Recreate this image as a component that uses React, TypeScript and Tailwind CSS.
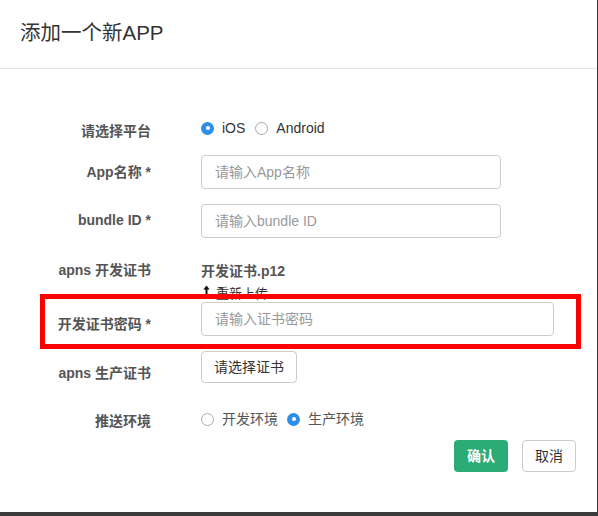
import React from 'react';

function Radio({ checked, label }: { checked?: boolean; label: string }) {
    return (
        <span className="flex items-center">
            {checked ? (
                <span className="w-[13px] h-[13px] rounded-full bg-[#2f8ee9] flex items-center justify-center">
                    <span className="w-[4px] h-[4px] rounded-full bg-white" />
                </span>
            ) : (
                <span className="w-[13px] h-[13px] rounded-full border border-[#a9a9a9] bg-white" />
            )}
            <span className="ml-[8px]">{label}</span>
        </span>
    );
}

function Label({ children, pt }: { children: React.ReactNode; pt: string }) {
    return <div className={`text-right font-bold text-[#555] text-[14px] leading-[20px] ${pt}`}>{children}</div>;
}

export default function App() {
    return (
        <div className="w-[598px] h-[516px] bg-[#3b3b3b] font-['Liberation_Sans','Noto_Sans_CJK_SC',sans-serif]">
            <div className="relative w-[597px] h-[512px] bg-white">
                <div className="h-[69px] border-b border-[#e5e5e5] flex items-center px-5 pb-[2px]">
                    <h1 className="text-[20.5px] text-[#333] leading-none">添加一个新APP</h1>
                </div>

                <div className="flex flex-col">
                    <div className="grid grid-cols-[151px_1fr] gap-x-[50px] mt-[44px]">
                        <Label pt="pt-[8px]">请选择平台</Label>
                        <div className="pt-[2px] flex items-center gap-[10px] text-[14px] leading-[20px] text-[#333]">
                            <Radio checked label="iOS" />
                            <Radio label="Android" />
                        </div>
                    </div>

                    <div className="grid grid-cols-[151px_1fr] gap-x-[50px] mt-[14px]">
                        <Label pt="pt-[7px]">App名称 *</Label>
                        <div className="w-[300px] h-[34px] border border-[#ccc] rounded-[4px] px-[13px] flex items-center text-[14px] text-[#999]">请输入App名称</div>
                    </div>

                    <div className="grid grid-cols-[151px_1fr] gap-x-[50px] mt-[15px]">
                        <Label pt="pt-[6px]">bundle ID *</Label>
                        <div className="w-[300px] h-[34px] border border-[#ccc] rounded-[4px] px-[13px] flex items-center text-[14px] text-[#999]">请输入bundle ID</div>
                    </div>

                    <div className="grid grid-cols-[151px_1fr] gap-x-[50px] mt-[22px]">
                        <Label pt="pt-0">apns 开发证书</Label>
                        <div className="flex flex-col h-[42px]">
                            <div className="pt-[1px] text-[14px] leading-[20px] font-bold text-[#555]">开发证书.p12</div>
                            <div className="mt-[3px] flex items-start text-[13px] leading-[16px] text-[#333] pl-[2px]">
                                <svg width="7" height="11" viewBox="0 0 7 11" className="mr-[6px] mt-[1px]">
                                    <path d="M3.5 0.5 L0.3 4.5 H2.5 V10.5 H4.5 V4.5 H6.7 Z" fill="#111" />
                                </svg>
                                <span className="mt-[2px]">重新上传</span>
                            </div>
                        </div>
                    </div>

                    <div className="grid grid-cols-[151px_1fr] gap-x-[50px] mt-0">
                        <Label pt="pt-[12px]">开发证书密码 *</Label>
                        <div className="w-[353px] h-[34px] border border-[#ccc] rounded-[4px] px-[13px] flex items-center text-[14px] text-[#999]">请输入证书密码</div>
                    </div>

                    <div className="grid grid-cols-[151px_1fr] gap-x-[50px] mt-[15px]">
                        <Label pt="pt-[12px]">apns 生产证书</Label>
                        <div>
                            <button className="w-[96px] h-[32px] border border-[#ccc] rounded-[4px] bg-white text-[14px] text-[#333]">请选择证书</button>
                        </div>
                    </div>

                    <div className="grid grid-cols-[151px_1fr] gap-x-[50px] mt-[22px]">
                        <Label pt="pt-[6px]">推送环境</Label>
                        <div className="pt-[2px] flex items-center gap-[9px] text-[14px] leading-[20px] text-[#555]">
                            <Radio label="开发环境" />
                            <Radio checked label="生产环境" />
                        </div>
                    </div>

                    <div className="flex justify-end gap-[14px] pr-[21px] mt-[9px]">
                        <button className="w-[54px] h-[32px] rounded-[4px] bg-[#2bab76] text-white text-[14px] font-bold">确认</button>
                        <button className="w-[54px] h-[32px] rounded-[4px] border border-[#ccc] bg-white text-[#333] text-[14px]">取消</button>
                    </div>
                </div>

                <div className="absolute left-[40px] top-[294px] w-[541px] h-[55px] border-[5px] border-[#ff0000] pointer-events-none" />
            </div>
        </div>
    );
}
